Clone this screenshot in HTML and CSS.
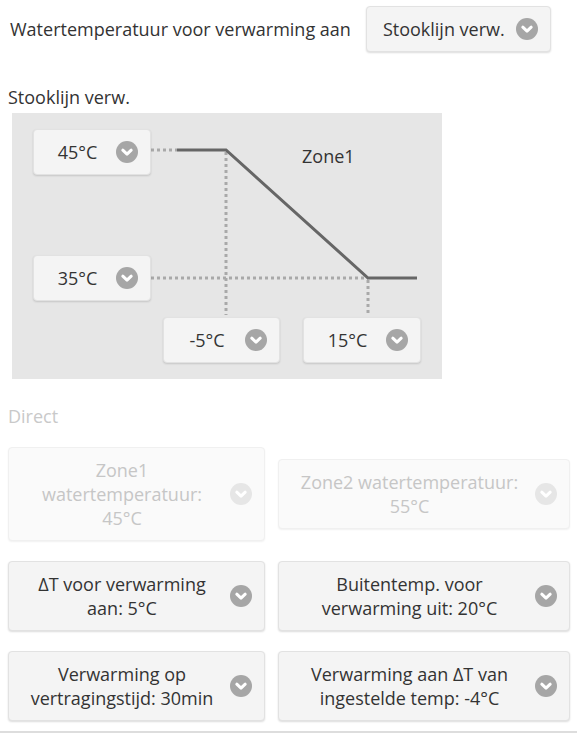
FILE: index.html
```html
<!DOCTYPE html>
<html lang="nl">
<head>
<meta charset="utf-8">
<title>Stooklijn</title>
<link rel="stylesheet" href="styles.css">
</head>
<body>
<div class="page">
  <div class="header">
    <span class="header-label">Watertemperatuur voor verwarming aan</span>
    <div class="select">
      <span class="select-text">Stooklijn verw.</span>
      <svg class="chev" viewBox="0 0 22 22"><circle cx="11" cy="11" r="11"/><polyline points="6.8,9.2 11,13.2 15.2,9.2"/></svg>
    </div>
  </div>

  <div class="section-title">Stooklijn verw.</div>

  <div class="chart">
    <svg class="chart-lines" width="430" height="266" viewBox="0 0 430 266">
      <path class="dot" d="M139 37 H165"/>
      <path class="dot" d="M139 165 H356"/>
      <path class="dot" d="M214 39 V202"/>
      <path class="dot" d="M356 167 V202"/>
      <path class="solid" d="M165 37 H214 L356 165 H405"/>
    </svg>
    <span class="zone-label">Zone1</span>
    <div class="select chart-box box-max">
      <span class="select-text">45°C</span>
      <svg class="chev" viewBox="0 0 22 22"><circle cx="11" cy="11" r="11"/><polyline points="6.8,9.2 11,13.2 15.2,9.2"/></svg>
    </div>
    <div class="select chart-box box-min">
      <span class="select-text">35°C</span>
      <svg class="chev" viewBox="0 0 22 22"><circle cx="11" cy="11" r="11"/><polyline points="6.8,9.2 11,13.2 15.2,9.2"/></svg>
    </div>
    <div class="select chart-box box-low">
      <span class="select-text">-5°C</span>
      <svg class="chev" viewBox="0 0 22 22"><circle cx="11" cy="11" r="11"/><polyline points="6.8,9.2 11,13.2 15.2,9.2"/></svg>
    </div>
    <div class="select chart-box box-high">
      <span class="select-text">15°C</span>
      <svg class="chev" viewBox="0 0 22 22"><circle cx="11" cy="11" r="11"/><polyline points="6.8,9.2 11,13.2 15.2,9.2"/></svg>
    </div>
  </div>

  <div class="direct-label">Direct</div>

  <div class="grid">
    <div class="select card disabled">
      <span class="select-text">Zone1 watertemperatuur: 45°C</span>
      <svg class="chev" viewBox="0 0 22 22"><circle cx="11" cy="11" r="11"/><polyline points="6.8,9.2 11,13.2 15.2,9.2"/></svg>
    </div>
    <div class="select card disabled">
      <span class="select-text">Zone2 watertemperatuur: 55°C</span>
      <svg class="chev" viewBox="0 0 22 22"><circle cx="11" cy="11" r="11"/><polyline points="6.8,9.2 11,13.2 15.2,9.2"/></svg>
    </div>
    <div class="select card">
      <span class="select-text">ΔT voor verwarming aan: 5°C</span>
      <svg class="chev" viewBox="0 0 22 22"><circle cx="11" cy="11" r="11"/><polyline points="6.8,9.2 11,13.2 15.2,9.2"/></svg>
    </div>
    <div class="select card">
      <span class="select-text">Buitentemp. voor verwarming uit: 20°C</span>
      <svg class="chev" viewBox="0 0 22 22"><circle cx="11" cy="11" r="11"/><polyline points="6.8,9.2 11,13.2 15.2,9.2"/></svg>
    </div>
    <div class="select card">
      <span class="select-text">Verwarming op vertragingstijd: 30min</span>
      <svg class="chev" viewBox="0 0 22 22"><circle cx="11" cy="11" r="11"/><polyline points="6.8,9.2 11,13.2 15.2,9.2"/></svg>
    </div>
    <div class="select card">
      <span class="select-text">Verwarming aan ΔT van ingestelde temp: -4°C</span>
      <svg class="chev" viewBox="0 0 22 22"><circle cx="11" cy="11" r="11"/><polyline points="6.8,9.2 11,13.2 15.2,9.2"/></svg>
    </div>
  </div>

  <div class="bottom-line"></div>
</div>
</body>
</html>
```

FILE: styles.css
```css
* {
  box-sizing: border-box;
}

html, body {
  margin: 0;
  padding: 0;
  background: #ffffff;
}

body {
  font-family: "Open Sans", "Noto Sans", "DejaVu Sans", sans-serif;
  font-size: 18px;
  line-height: 24px;
  color: #333333;
}

.page {
  padding: 0 7px 0 8px;
}

.header {
  display: flex;
  align-items: center;
  gap: 15px;
  padding: 6px 0 0 2px;
}

.header-label {
  color: #333333;
}

.select {
  display: flex;
  align-items: center;
  gap: 11px;
  padding: 10px 12px 10px 16px;
  background: #f4f4f4;
  border: 1px solid #e2e2e2;
  border-radius: 4px;
  box-shadow: 0 1px 2px rgba(0, 0, 0, 0.14);
}

.select-text {
  flex: 1 1 auto;
  text-align: center;
}

.chev {
  flex: 0 0 22px;
  width: 22px;
  height: 22px;
  display: block;
}

.chev circle {
  fill: #a6a6a6;
}

.chev polyline {
  fill: none;
  stroke: #ffffff;
  stroke-width: 3;
  stroke-linecap: round;
  stroke-linejoin: round;
}

.section-title {
  margin-top: 33px;
  color: #333333;
}

.chart {
  position: relative;
  width: 430px;
  height: 266px;
  margin: 4px 0 0 4px;
  background: #e6e6e6;
}

.chart-lines {
  position: absolute;
  left: 0;
  top: 0;
}

.chart-lines path {
  fill: none;
  stroke-width: 3;
}

.chart-lines .dot {
  stroke: #a9a9a9;
  stroke-dasharray: 3 3;
}

.chart-lines .solid {
  stroke: #666666;
  stroke-linejoin: miter;
}

.zone-label {
  position: absolute;
  left: 290px;
  top: 31px;
  color: #333333;
}

.chart-box {
  position: absolute;
  width: 118px;
  height: 46px;
}

.box-max {
  left: 21px;
  top: 16px;
}

.box-min {
  left: 21px;
  top: 142px;
}

.box-low {
  left: 151px;
  top: 204px;
  width: 117px;
}

.box-high {
  left: 291px;
  top: 204px;
}

.direct-label {
  margin-top: 25px;
  color: #c9c9c9;
}

.grid {
  display: grid;
  grid-template-columns: 257px 292px;
  column-gap: 13px;
  row-gap: 20px;
  align-items: center;
  margin-top: 19px;
}

.card {
  min-height: 70px;
}

.card.disabled {
  background: #fafafa;
  border-color: #f0f0f0;
  box-shadow: 0 1px 2px rgba(0, 0, 0, 0.06);
  color: #c6c6c6;
}

.card.disabled .chev circle {
  fill: #e6e6e6;
}

.bottom-line {
  height: 2px;
  margin: 10px -7px 0 -8px;
  background: #dddddd;
}
```
